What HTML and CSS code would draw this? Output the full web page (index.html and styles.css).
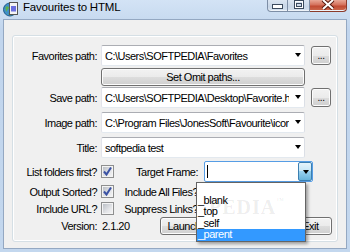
FILE: index.html
```html
<!DOCTYPE html>
<html lang="en">
<head>
  <meta charset="UTF-8" />
  <title>Favourites to HTML</title>
  <link rel="stylesheet" href="styles.css">
</head>
<body>
  <div class="window">
    <div class="titlebar">
      <svg class="app-icon" width="16" height="16" viewBox="0 0 16 16">
        <circle cx="7" cy="8.5" r="6.5" fill="#3f8fc9" stroke="#1d5a8a" stroke-width="1"/>
        <path d="M2.5 6 Q5 4 6 7 Q4 9 3 11 Z" fill="#5fb347"/>
        <path d="M5 13 Q7 11 9 12 L8 14.5 Z" fill="#5fb347"/>
        <rect x="6.5" y="1.5" width="8" height="12" fill="#f4f4f4" stroke="#555" stroke-width="1"/>
        <rect x="8" y="5" width="5" height="5.5" fill="#6a6fe0"/>
      </svg>
      <span class="title">Favourites to HTML</span>
      <div class="caption-btns">
        <div class="cap-btn min">
          <svg width="11" height="5" viewBox="0 0 11 5"><rect x="0.5" y="0.5" width="10" height="4" fill="#fff" stroke="#3b4a5e"/></svg>
        </div>
        <div class="cap-btn max">
          <svg width="10" height="9" viewBox="0 0 10 9"><rect x="0.5" y="0.5" width="9" height="8" fill="none" stroke="#3b4a5e"/><rect x="1.5" y="1.5" width="7" height="6" fill="none" stroke="#fff"/><rect x="2.5" y="3.5" width="5" height="3" fill="none" stroke="#3b4a5e"/></svg>
        </div>
        <div class="cap-btn close">
          <svg width="14" height="10" viewBox="0 0 14 10"><path d="M2 0 L12 9 M12 0 L2 9" stroke="#5a1b10" stroke-width="4"/><path d="M2 0 L12 9 M12 0 L2 9" stroke="#fff" stroke-width="2"/></svg>
        </div>
      </div>
    </div>

    <div class="client">
      <div class="group">
        <div class="row r-fav">
          <span class="lbl">Favorites path:</span>
          <div class="combo"><span class="val">C:\Users\SOFTPEDIA\Favorites</span><span class="arrow"></span></div>
          <button class="btn dots">...</button>
        </div>
        <div class="row r-omit">
          <span class="lbl"></span>
          <button class="btn omit">Set Omit paths...</button>
        </div>
        <div class="row r-save">
          <span class="lbl">Save path:</span>
          <div class="combo"><span class="val">C:\Users\SOFTPEDIA\Desktop\Favorite.htm</span><span class="arrow"></span></div>
          <button class="btn dots">...</button>
        </div>
        <div class="row r-image">
          <span class="lbl">Image path:</span>
          <div class="combo"><span class="val">C:\Program Files\JonesSoft\Favourite\icons</span><span class="arrow"></span></div>
        </div>
        <div class="row r-title">
          <span class="lbl">Title:</span>
          <div class="combo"><span class="val">softpedia test</span><span class="arrow"></span></div>
        </div>
        <div class="row r-list">
          <span class="lbl">List folders first?</span>
          <span class="cb checked"><svg width="11" height="11" viewBox="0 0 11 11"><path d="M2 5.5 L4.5 8.5 L9 1.5" fill="none" stroke="#3c53a4" stroke-width="2"/></svg></span>
          <span class="lbl2">Target Frame:</span>
          <div class="combo target"><span class="caret"></span><span class="drop-btn"><span class="arrow"></span></span></div>
        </div>
        <div class="row r-sorted">
          <span class="lbl">Output Sorted?</span>
          <span class="cb checked"><svg width="11" height="11" viewBox="0 0 11 11"><path d="M2 5.5 L4.5 8.5 L9 1.5" fill="none" stroke="#3c53a4" stroke-width="2"/></svg></span>
          <span class="lbl2">Include All Files?</span>
          <span class="cb"></span>
        </div>
        <div class="row r-url">
          <span class="lbl">Include URL?</span>
          <span class="cb"></span>
          <span class="lbl2">Suppress Links?</span>
          <span class="cb"></span>
        </div>
        <div class="row r-version">
          <span class="lbl">Version:</span>
          <span class="version">2.1.20</span>
          <button class="btn launch">Launch HTML in Browser and Exit</button>
        </div>
      </div>
    </div>

    <ul class="droplist">
      <li></li>
      <li>_blank</li>
      <li>_top</li>
      <li>_self</li>
      <li class="sel">_parent</li>
      <span class="wm">PEDIA<small>™</small></span>
    </ul>
  </div>
</body>
</html>
```

FILE: styles.css
```css
* {
  box-sizing: border-box;
}
body {
  margin: 0;
  font-family: 'Liberation Sans', Arial, sans-serif;
  font-size: 11px;
  letter-spacing: -0.5px;
  color: #000;
  background: #c3d7ee;
}
.window {
  position: relative;
  width: 350px;
  height: 252px;
  overflow: hidden;
  background: linear-gradient(#d3e3f5, #c1d5ed 30px, #c3d7ee);
}
.titlebar {
  height: 19px;
  display: flex;
  align-items: flex-start;
}
.app-icon {
  margin: 1px 0 0 3px;
}
.title {
  margin: 1px 0 0 4px;
  font-size: 11.5px;
  letter-spacing: -0.2px;
  line-height: 13px;
}
.caption-btns {
  margin-left: auto;
  margin-right: 3px;
  display: flex;
  height: 12px;
}
.cap-btn {
  height: 12px;
  display: flex;
  justify-content: center;
  align-items: flex-start;
  border: 1px solid #7d8ea6;
  border-top: none;
  background: linear-gradient(#dbe5f1, #c8d6e7 60%, #d6e2ef);
  box-shadow: inset 0 -1px 0 #eef3f9;
}
.min {
  width: 21px;
  border-radius: 0 0 0 4px;
  padding-top: 4px;
}
.max {
  width: 22px;
  border-left: none;
  padding-top: 0;
}
.close {
  width: 37px;
  border-left: none;
  border-color: #8b3b2c;
  border-radius: 0 0 4px 0;
  background: linear-gradient(#e9a796, #d4705b 45%, #c14a33 55%, #cd6b4f);
  padding-top: 0;
}
.client {
  margin: 0 3px;
  height: 230px;
  background: #f0f0f0;
  border: 1px solid #94a8c2;
  padding: 15px 8px 6px 8px;
}
.group {
  height: 207px;
  border: 1px solid #d5dfe5;
  border-radius: 3px;
  box-shadow: inset 0 0 0 1px #fff;
  padding-top: 0;
}
.row {
  display: flex;
  align-items: center;
  gap: 4px;
}
.lbl {
  width: 84px;
  flex: none;
  text-align: right;
  white-space: nowrap;
}
.r-fav { margin-top: 9px; height: 21px; }
.r-omit { margin-top: 2px; height: 18px; }
.r-save { margin-top: 1px; height: 21px; }
.r-image { margin-top: 4px; height: 21px; }
.r-title { margin-top: 4px; height: 21px; }
.r-list { margin-top: 3px; height: 21px; }
.r-sorted { height: 19px; }
.r-url { height: 15px; }
.r-version { margin-top: 1px; height: 18px; }

.combo {
  position: relative;
  width: 204px;
  height: 21px;
  flex: none;
  display: flex;
  align-items: center;
  padding-left: 3px;
  background: #fff;
  border: 1px solid;
  border-color: #abadb3 #dbdfe6 #e3e9ef #e2e3ea;
  border-radius: 2px;
}
.val {
  width: 184px;
  overflow: hidden;
  white-space: nowrap;
}
.arrow {
  position: absolute;
  right: 3px;
  top: 7px;
  width: 0;
  height: 0;
  border-top: 4px solid #000;
  border-left: 3.5px solid transparent;
  border-right: 3.5px solid transparent;
}
.combo.target {
  width: 109px;
  margin-left: 3px;
  border-color: #569de5;
}
.caret {
  width: 1px;
  height: 13px;
  background: #000;
  margin-left: -1px;
}
.drop-btn {
  position: absolute;
  right: 0;
  top: 0;
  width: 14px;
  height: 19px;
  border: 1px solid #3c7fb1;
  border-radius: 2px;
  background: linear-gradient(#e5f4fc, #c4e5f6 50%, #98d1ef 50%, #68b3db);
}
.drop-btn .arrow {
  right: 2px;
  top: 7px;
}
.btn {
  font: inherit;
  letter-spacing: inherit;
  color: #000;
  padding: 0;
  border: 1px solid #707070;
  border-radius: 3px;
  background: linear-gradient(#f2f2f2, #ebebeb 50%, #dddddd 51%, #cfcfcf);
  box-shadow: inset 0 0 0 1px #fcfcfc;
}
.dots {
  width: 20px;
  height: 19px;
  margin-left: 2px;
  font-size: 10px;
  line-height: 15px;
}
.omit {
  width: 204px;
  height: 18px;
}
.cb {
  position: relative;
  width: 13px;
  height: 13px;
  flex: none;
  border: 1px solid #8e8f8f;
  box-shadow: inset 0 0 0 1px #f4f4f4;
  background: linear-gradient(135deg, #b4b9c0, #e4e5e8 60%, #f6f6f6);
}
.cb svg {
  position: absolute;
  left: 0;
  top: 0;
}
.lbl2 {
  width: 80px;
  flex: none;
  text-align: right;
  white-space: nowrap;
  margin-right: -1px;
}
.version {
  width: 55px;
  flex: none;
  padding-left: 1px;
}
.launch {
  width: 172px;
  height: 18px;
  padding-right: 6px;
}

.droplist {
  position: absolute;
  left: 196px;
  top: 182px;
  width: 110px;
  height: 60px;
  margin: 0;
  padding: 0;
  list-style: none;
  background: #fff;
  border: 1px solid #646464;
  box-shadow: 2px 2px 3px rgba(0, 0, 0, 0.35);
  overflow: hidden;
}
.droplist li {
  height: 11.6px;
  line-height: 11.6px;
  padding-left: 1px;
}
.droplist li.sel {
  background: #3399ff;
  color: #fff;
}
.wm {
  position: absolute;
  left: 12px;
  top: 13px;
  font-family: 'Liberation Serif', serif;
  font-weight: bold;
  font-size: 20px;
  letter-spacing: 1px;
  color: rgba(0, 0, 0, 0.08);
  pointer-events: none;
}
.wm small {
  font-size: 8px;
  vertical-align: top;
}
```
